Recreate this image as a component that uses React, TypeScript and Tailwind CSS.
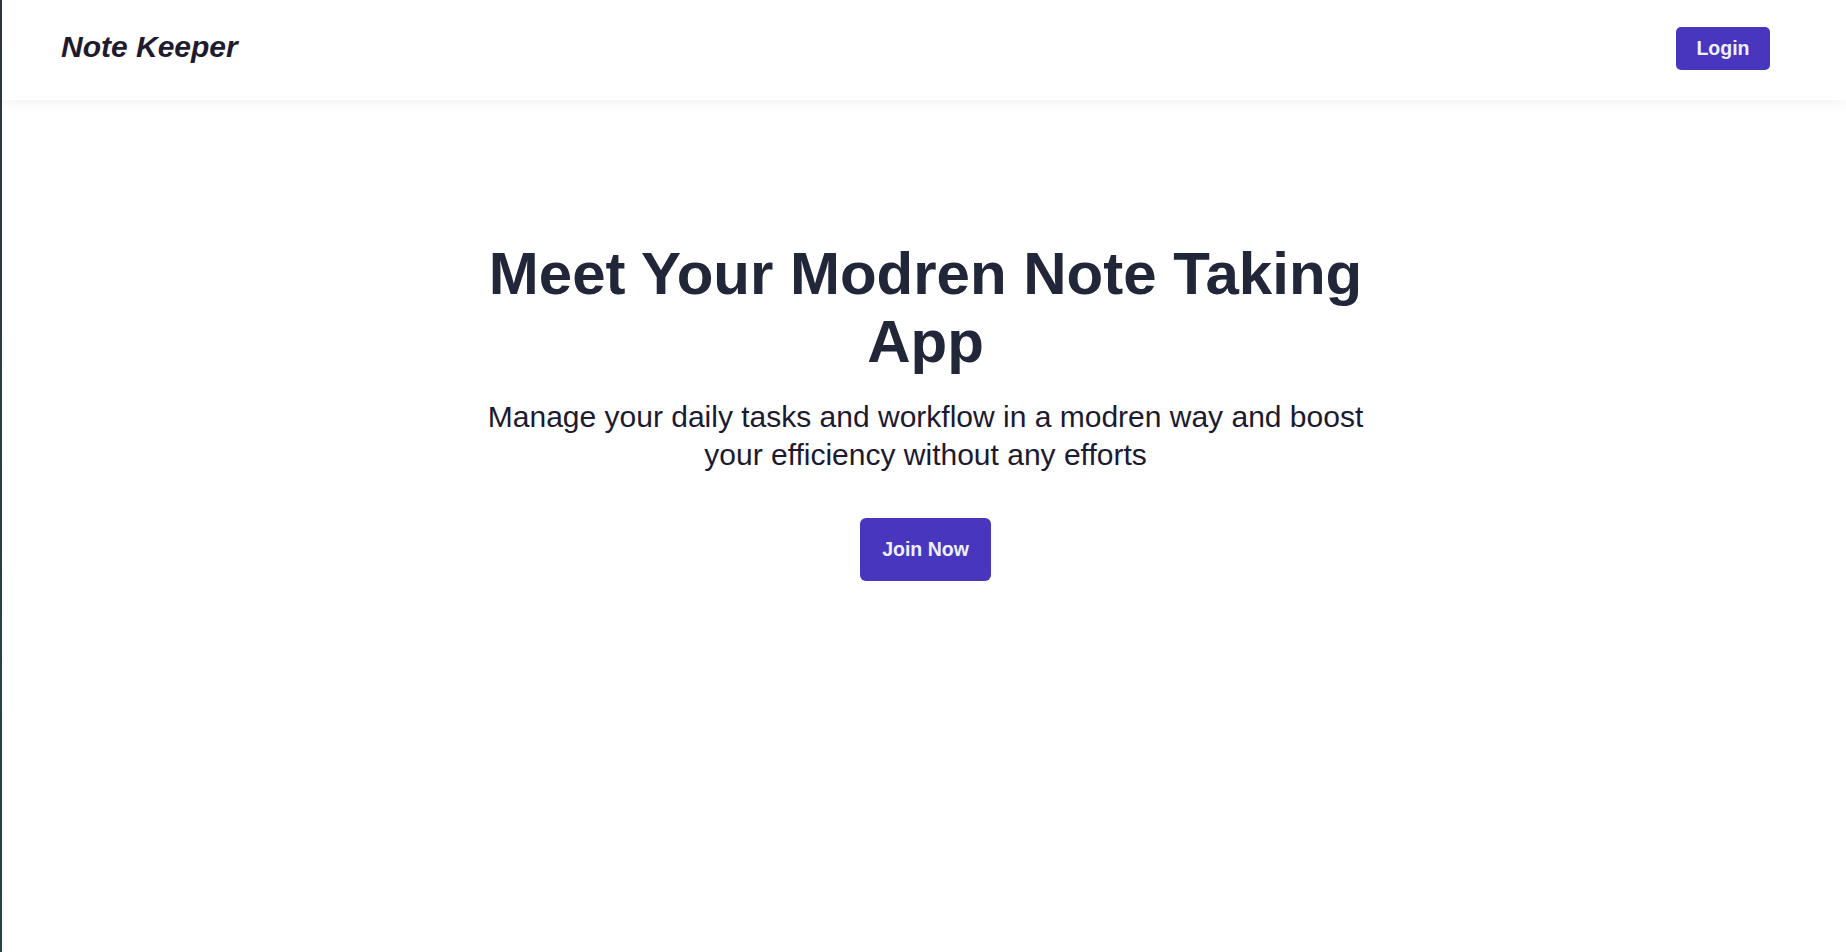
export default function App() {
  return (
    <div className="flex min-h-[952px] w-full bg-white" style={{ fontFamily: '"Liberation Sans", Arial, sans-serif' }}>
      <div className="w-[2px] shrink-0 bg-gradient-to-b from-[#2e3541] to-[#1d4848]" />
      <div className="flex flex-1 flex-col">
        <header className="flex h-[100px] items-center justify-between bg-white pb-[3px] pl-[59px] pr-[76px] shadow-[0_4px_14px_rgba(0,0,0,0.05)]">
          <h1 className="mb-[3px] text-[30px] leading-[36px] font-bold italic text-[#1e1b2e]">Note Keeper</h1>
          <button className="flex h-[43px] w-[94px] items-center justify-center rounded-[5px] bg-[#4936bf] text-[19.5px] font-bold text-[#eef0ff]">
            Login
          </button>
        </header>

        <main className="flex flex-col items-center pl-[3px] pt-[140px]">
          <div className="flex w-[896px] flex-col items-center text-center">
            <h2 className="text-[60px] leading-[68px] font-bold text-[#212638]">
              Meet Your Modren Note Taking App
            </h2>
            <p className="mt-[22px] text-[30px] leading-[38px] text-[#1c1a30]">
              Manage your daily tasks and workflow in a modren way and boost your efficiency without any efforts
            </p>
            <button className="mt-[44px] flex h-[63px] items-center justify-center rounded-[6px] bg-[#4936bf] px-[22px] text-[19.5px] font-bold text-[#eef0ff]">
              Join Now
            </button>
          </div>
        </main>
      </div>
    </div>
  );
}
